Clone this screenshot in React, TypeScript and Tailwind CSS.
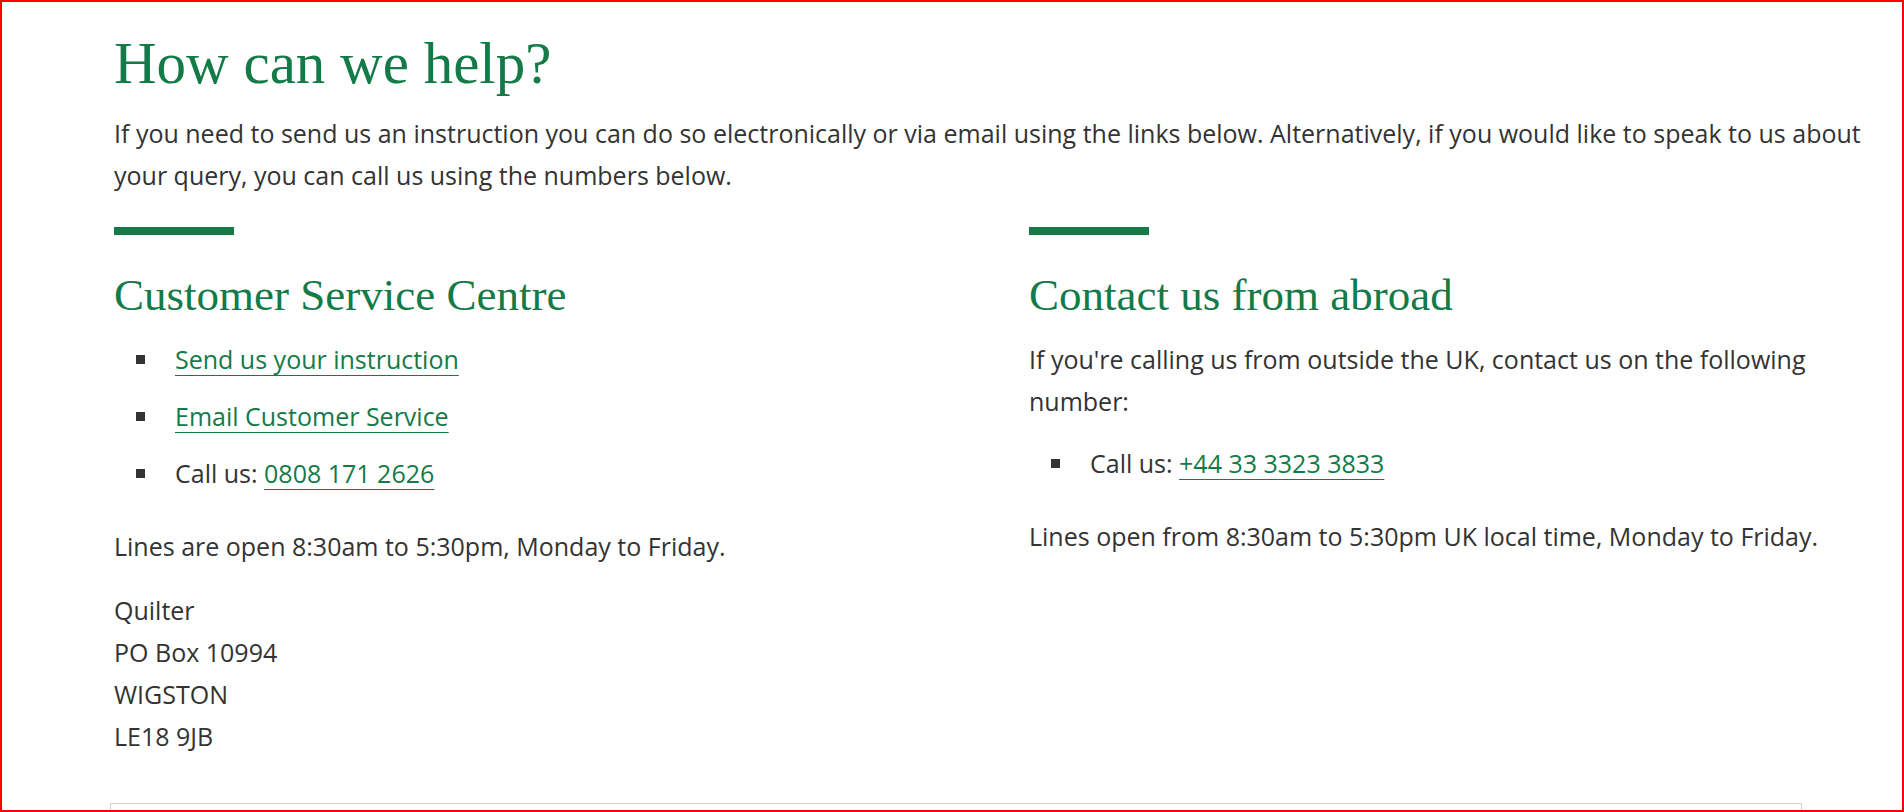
import React from 'react';

const serif = "font-['Liberation_Serif',serif]";

function Bullet() {
  return <span className="mt-[17px] mr-[30px] ml-[22px] inline-block h-[9px] w-[9px] shrink-0 bg-[#333333]" />;
}

function ContactLink({ children }: { children: React.ReactNode }) {
  return (
    <a href="#" className="text-[#137a48] underline decoration-1 underline-offset-[6px]">
      {children}
    </a>
  );
}

function SectionHeading({ children }: { children: React.ReactNode }) {
  return (
    <>
      <div className="h-[8px] w-[120px] bg-[#137a48]" />
      <h2 className={`${serif} mt-[33px] mb-[16px] text-[45px] leading-[54px] font-normal text-[#137a48]`}>{children}</h2>
    </>
  );
}

export default function App() {
  return (
    <div className="h-[812px] w-[1904px] overflow-hidden border-2 border-[#ff0000] bg-white font-['Open_Sans',sans-serif] text-[25px] leading-[42px] text-[#333333]">
      <div className="w-[1888px] pt-[28px] pl-[112px]">
        <h1 className={`${serif} mb-[16px] text-[59px] leading-[66px] font-normal text-[#137a48]`}>How can we help?</h1>
        <p className="mb-[31px] w-[1776px]">
          If you need to send us an instruction you can do so electronically or via email using the links below. Alternatively, if you would like to speak to us about your query, you can call us using the numbers below.
        </p>

        <div className="grid w-[1776px] grid-cols-[862px_1fr] gap-x-[53px]">
          {/* Left column */}
          <div>
            <SectionHeading>Customer Service Centre</SectionHeading>
            <ul className="mb-[31px]">
              <li className="mb-[15px] flex">
                <Bullet />
                <ContactLink>Send us your instruction</ContactLink>
              </li>
              <li className="mb-[15px] flex">
                <Bullet />
                <ContactLink>Email Customer Service</ContactLink>
              </li>
              <li className="mb-[15px] flex">
                <Bullet />
                <span>
                  Call us: <ContactLink>0808 171 2626</ContactLink>
                </span>
              </li>
            </ul>
            <p className="mb-[22px]">Lines are open 8:30am to 5:30pm, Monday to Friday.</p>
            <p>
              Quilter
              <br />
              PO Box 10994
              <br />
              WIGSTON
              <br />
              LE18 9JB
            </p>
          </div>

          {/* Right column */}
          <div>
            <SectionHeading>Contact us from abroad</SectionHeading>
            <p className="mb-[20px]">If you're calling us from outside the UK, contact us on the following number:</p>
            <ul className="mb-[31px]">
              <li className="mb-[15px] flex">
                <Bullet />
                <span>
                  Call us: <ContactLink>+44 33 3323 3833</ContactLink>
                </span>
              </li>
            </ul>
            <p>Lines open from 8:30am to 5:30pm UK local time, Monday to Friday.</p>
          </div>
        </div>
      </div>

      <div className="mt-[46px] ml-[108px] h-[60px] w-[1692px] border border-[#d0d0d0]" />
    </div>
  );
}
